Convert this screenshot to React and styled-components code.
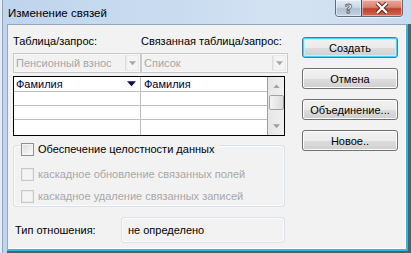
import styled, { createGlobalStyle } from "styled-components";

const GlobalStyle = createGlobalStyle`
  html, body {
    margin: 0;
    padding: 0;
    background: #ffffff;
  }
  * {
    box-sizing: border-box;
  }
`;

const FONT = `"Liberation Sans", "Noto Sans", Arial, sans-serif`;

// 창 전체
const Window = styled.div`
  width: 411px;
  height: 253px;
  display: flex;
  flex-direction: column;
  overflow: hidden;
  font-family: ${FONT};
  font-size: 11px;
  color: #000;
  background: linear-gradient(90deg, #bfd5ed 0%, #cadcf0 45%, #d4e3f3 70%, #c8daee 100%);
  box-shadow: inset 2px 0 0 #e4edf7, inset 3px 0 0 #8fa3ba;
`;

// 타이틀 바
const TitleBar = styled.div`
  height: 24px;
  flex: none;
  display: flex;
  align-items: flex-start;
  padding-left: 8px;
  padding-right: 8px;
`;

const TitleText = styled.span`
  line-height: 26px;
  font-size: 11.5px;
  color: #000;
`;

const CaptionButtons = styled.div`
  margin-left: auto;
  display: flex;
  height: 17px;
  border: 1px solid #5b6b80;
  border-top: none;
  border-radius: 0 0 4px 4px;
  overflow: hidden;
  box-shadow: 0 1px 0 rgba(255, 255, 255, 0.6);
`;

const CaptionBtn = styled.div`
  width: ${({ wide }) => (wide ? "41px" : "25px")};
  height: 100%;
  display: flex;
  align-items: center;
  justify-content: center;
  border-left: ${({ wide }) => (wide ? "1px solid #5b4040" : "none")};
  background: ${({ wide }) =>
    wide
      ? "linear-gradient(180deg, #e9a99c 0%, #d9826f 45%, #c0402a 55%, #d26650 100%)"
      : "linear-gradient(180deg, #e4ecf5 0%, #cad8e8 45%, #aebfd4 55%, #c3d3e5 100%)"};
  box-shadow: inset 0 0 0 1px rgba(255, 255, 255, 0.45);
`;

const HelpMark = styled.span`
  font-family: "DejaVu Sans", sans-serif;
  font-weight: bold;
  font-size: 13px;
  line-height: 15px;
  color: #ffffff;
  -webkit-text-stroke: 0.8px #4a5a70;
`;

// 본문 영역 (프레임 포함)
const Body = styled.div`
  flex: 1;
  min-height: 0;
  display: flex;
  padding-left: 7px;
`;

const Shell = styled.div`
  flex: 1;
  display: flex;
  background: #5c5c5c;
  padding: 0 3px 2px 0;
`;

const Client = styled.div`
  flex: 1;
  display: flex;
  gap: 14px;
  padding: 8px 0 0 5px;
  background: #f2f2f2;
  border-top: 1px solid #93a6bd;
  border-left: 1px solid #93a6bd;
  border-right: 2px solid #2cb6ea;
  border-bottom: 2px solid #2cb6ea;
  box-shadow: inset -1px -1px 0 #ffffff;
`;

const LeftColumn = styled.div`
  width: 275px;
  display: flex;
  flex-direction: column;
`;

const TwoCols = styled.div`
  display: grid;
  grid-template-columns: 128px 147px;
  margin-top: ${({ mt }) => mt || 0}px;
`;

const FieldLabel = styled.span`
  line-height: 16px;
  white-space: nowrap;
  color: #000;
`;

// 비활성 콤보박스
const Combo = styled.div`
  height: 20px;
  display: flex;
  border: 1px solid #c9c9c9;
  background: #f2f2f2;
  box-shadow: inset 0 0 0 1px #f8f8f8;
`;

const ComboText = styled.span`
  flex: 1;
  padding-left: 2px;
  line-height: 18px;
  color: #a7a7a7;
  white-space: nowrap;
  overflow: hidden;
`;

const ComboArrow = styled.div`
  width: 14px;
  display: flex;
  align-items: center;
  justify-content: center;
  border-left: 1px solid #dedede;
  background: #f4f4f4;
  margin: 1px 1px 1px 0;
  box-shadow: inset 0 0 0 1px #e9e9e9;
`;

// 필드 매칭 그리드
const Grid = styled.div`
  margin-top: 3px;
  width: 272px;
  height: 60px;
  border: 1px solid #000;
  background: #fff;
  display: flex;
`;

const GridCells = styled.div`
  flex: 1;
  display: grid;
  grid-template-columns: 127px 126px;
  grid-template-rows: 15px 14px 14px 1fr;
`;

const Cell = styled.div`
  display: flex;
  align-items: center;
  padding-left: ${({ first }) => (first ? 2 : 3)}px;
  padding-right: 4px;
  border-right: ${({ first }) => (first ? "1px solid #bfbfbf" : "none")};
  border-bottom: ${({ last }) => (last ? "none" : "1px solid #bfbfbf")};
  line-height: 14px;
  color: #000033;
`;

const CellText = styled.span`
  flex: 1;
`;

const ScrollBar = styled.div`
  width: 17px;
  display: flex;
  flex-direction: column;
  align-items: center;
  border-left: 1px solid #a0a0a0;
  background: linear-gradient(90deg, #e6e6e6, #f0f0f0);
`;

const ScrollArrow = styled.div`
  height: 17px;
  width: 100%;
  display: flex;
  align-items: center;
  justify-content: center;
`;

const Thumb = styled.div`
  width: 15px;
  height: 15px;
  margin-top: 1px;
  border: 1px solid #a3a3a3;
  border-radius: 2px;
  background: linear-gradient(90deg, #f4f4f4, #dcdcdc);
`;

const Spacer = styled.div`
  flex: 1;
`;

// 체크박스 그룹
const Group = styled.div`
  margin-top: 9px;
  width: 272px;
  height: 62px;
  border: 1px solid #d9e2e8;
  border-radius: 3px;
  box-shadow: inset 0 0 0 1px #fbfbfb;
  display: flex;
  flex-direction: column;
  align-items: flex-start;
  padding-left: 7px;
`;

const CheckRow = styled.label`
  display: inline-flex;
  align-items: center;
  gap: 4px;
  height: 14px;
  padding-right: 5px;
  background: #f2f2f2;
  margin-top: ${({ mt }) => mt}px;
  color: ${({ disabled }) => (disabled ? "#a8a8a8" : "#000")};
  line-height: 14px;
  white-space: nowrap;
`;

const Box = styled.span`
  width: 13px;
  height: 13px;
  border: 1px solid ${({ disabled }) => (disabled ? "#c8c8c8" : "#8f8f8f")};
  background: ${({ disabled }) =>
    disabled
      ? "#f4f4f4"
      : "linear-gradient(135deg, #dcdcdc 0%, #f0f0f0 60%, #fafafa 100%)"};
  box-shadow: inset 0 0 0 1px ${({ disabled }) => (disabled ? "#eaeaea" : "#f4f4f4")};
  flex: none;
`;

// 관계 유형
const TypeRow = styled.div`
  margin-top: 10px;
  display: flex;
  align-items: center;
`;

const TypeLabel = styled.span`
  width: 108px;
  padding-left: 2px;
`;

const TypeBox = styled.div`
  width: 164px;
  height: 26px;
  display: flex;
  align-items: center;
  padding-left: 6px;
  border: 1px solid #dce2e7;
  border-radius: 3px;
  box-shadow: inset 0 0 0 1px #fafafa;
`;

// 오른쪽 버튼
const ButtonColumn = styled.div`
  width: 96px;
  display: flex;
  flex-direction: column;
  gap: 10px;
  padding-top: 4px;
`;

const Button = styled.button`
  height: 21px;
  width: 96px;
  padding: 0;
  font-family: ${FONT};
  font-size: 11px;
  color: #000;
  border: 1px solid ${({ primary }) => (primary ? "#3c7fb1" : "#707070")};
  border-radius: 3px;
  background: linear-gradient(180deg, #f2f2f2 0%, #ebebeb 50%, #dddddd 51%, #cfcfcf 100%);
  box-shadow: ${({ primary }) =>
    primary
      ? "inset 0 0 0 1px #48d4f8, inset 0 0 0 2px #c4eefc"
      : "inset 0 0 0 1px #fcfcfc"};
`;

const Down = ({ color = "#a8a8a8", w = 7 }) => (
  <svg width={w} height={Math.ceil(w / 2) + 1} viewBox="0 0 8 5">
    <path d="M0 0 H8 L4 4.5 Z" fill={color} />
  </svg>
);

const Up = () => (
  <svg width="7" height="4" viewBox="0 0 8 5">
    <path d="M0 5 H8 L4 0.5 Z" fill="#a0a0a0" />
  </svg>
);

const CloseX = () => (
  <svg width="14" height="12" viewBox="0 0 14 12">
    <path d="M2 1 L12 11 M12 1 L2 11" fill="none" stroke="#5a2a22" strokeWidth="4.2" />
    <path d="M2 1 L12 11 M12 1 L2 11" fill="none" stroke="#ffffff" strokeWidth="2.2" />
  </svg>
);

const App = () => {
  return (
    <>
      <GlobalStyle />
      <Window>
        <TitleBar>
          <TitleText>Изменение связей</TitleText>
          <CaptionButtons>
            <CaptionBtn>
              <HelpMark>?</HelpMark>
            </CaptionBtn>
            <CaptionBtn wide>
              <CloseX />
            </CaptionBtn>
          </CaptionButtons>
        </TitleBar>
        <Body>
          <Shell>
            <Client>
              <LeftColumn>
                <TwoCols>
                  <FieldLabel>Таблица/запрос:</FieldLabel>
                  <FieldLabel>Связанная таблица/запрос:</FieldLabel>
                </TwoCols>
                <TwoCols mt={4}>
                  <Combo>
                    <ComboText>Пенсионный взнос</ComboText>
                    <ComboArrow>
                      <Down />
                    </ComboArrow>
                  </Combo>
                  <Combo>
                    <ComboText>Список</ComboText>
                    <ComboArrow>
                      <Down />
                    </ComboArrow>
                  </Combo>
                </TwoCols>
                <Grid>
                  <GridCells>
                    <Cell first>
                      <CellText>Фамилия</CellText>
                      <Down color="#0a0a5c" w={9} />
                    </Cell>
                    <Cell>
                      <CellText>Фамилия</CellText>
                    </Cell>
                    <Cell first />
                    <Cell />
                    <Cell first />
                    <Cell />
                    <Cell first last />
                    <Cell last />
                  </GridCells>
                  <ScrollBar>
                    <ScrollArrow>
                      <Up />
                    </ScrollArrow>
                    <Thumb />
                    <Spacer />
                    <ScrollArrow>
                      <Down color="#a0a0a0" />
                    </ScrollArrow>
                  </ScrollBar>
                </Grid>
                <Group>
                  <CheckRow mt={-4}>
                    <Box />
                    Обеспечение целостности данных
                  </CheckRow>
                  <CheckRow mt={11} disabled>
                    <Box disabled />
                    каскадное обновление связанных полей
                  </CheckRow>
                  <CheckRow mt={8} disabled>
                    <Box disabled />
                    каскадное удаление связанных записей
                  </CheckRow>
                </Group>
                <TypeRow>
                  <TypeLabel>Тип отношения:</TypeLabel>
                  <TypeBox>не определено</TypeBox>
                </TypeRow>
              </LeftColumn>
              <ButtonColumn>
                <Button primary>Создать</Button>
                <Button>Отмена</Button>
                <Button>Объединение...</Button>
                <Button>Новое..</Button>
              </ButtonColumn>
            </Client>
          </Shell>
        </Body>
      </Window>
    </>
  );
};

export default App;
